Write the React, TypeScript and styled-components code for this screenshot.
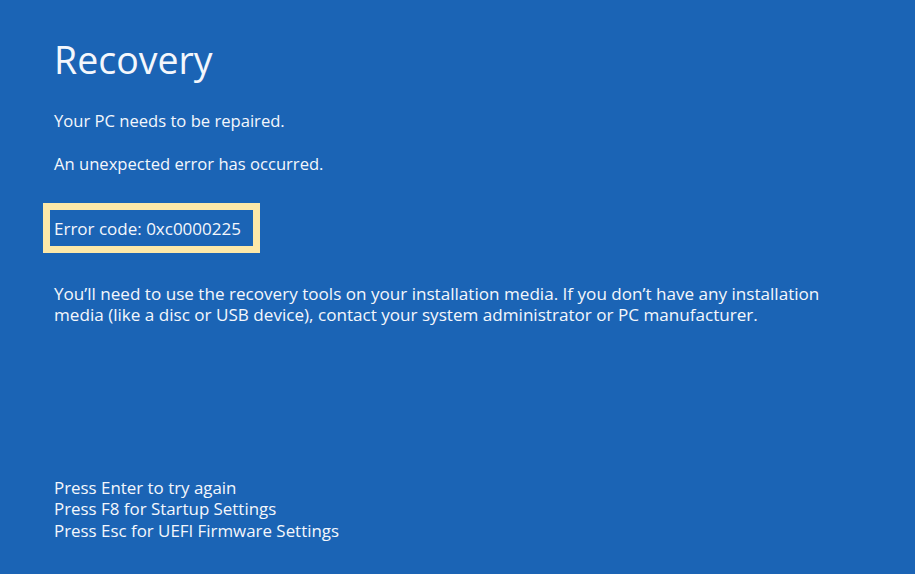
import styled, { createGlobalStyle } from 'styled-components'

const GlobalStyle = createGlobalStyle`
  html, body {
    margin: 0;
    padding: 0;
    background: #1b64b5;
  }
`

const Screen = styled.div`
  box-sizing: border-box;
  width: 915px;
  height: 574px;
  background: #1b64b5;
  color: #f4f7fc;
  font-family: 'Open Sans', 'Noto Sans', sans-serif;
  padding: 36px 0 33px 54px;
  display: flex;
  flex-direction: column;
  overflow: hidden;
`

const Title = styled.h1`
  margin: 0;
  font-size: 37.5px;
  font-weight: 400;
  line-height: 48px;
`

const Line = styled.p<{ $top: number }>`
  margin: ${(p) => p.$top}px 0 0 0;
  font-size: 16.6px;
  line-height: 21px;
`

const ErrorBox = styled.div`
  align-self: flex-start;
  margin: 29px 0 0 -11px;
  border: 7px solid #fde8a8;
  padding: 8px 12px 7px 4px;
  font-size: 17px;
  line-height: 21px;
`

const Paragraph = styled.p`
  margin: 30px 0 0 0;
  font-size: 17.1px;
  line-height: 21px;
`

const Footer = styled.div`
  margin-top: auto;
  font-size: 16.9px;
  line-height: 21.5px;
`

const App = () => {
  return (
    <>
      <GlobalStyle />
      <Screen>
        <Title>Recovery</Title>
        <Line $top={26}>Your PC needs to be repaired.</Line>
        <Line $top={22}>An unexpected error has occurred.</Line>
        <ErrorBox>Error code: 0xc0000225</ErrorBox>
        <Paragraph>
          You’ll need to use the recovery tools on your installation media. If you don’t have any installation
          <br />
          media (like a disc or USB device), contact your system administrator or PC manufacturer.
        </Paragraph>
        <Footer>
          <div>Press Enter to try again</div>
          <div>Press F8 for Startup Settings</div>
          <div>Press Esc for UEFI Firmware Settings</div>
        </Footer>
      </Screen>
    </>
  )
}

export default App
